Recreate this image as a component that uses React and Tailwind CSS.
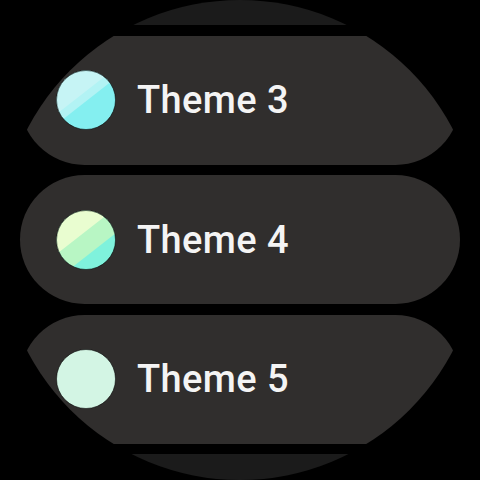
import React from "react";

function Swatch({ id, base, bands = [] }) {
  // bands: [color, endY] drawn over base, in a frame rotated so stripes rise to the right
  return (
    <svg width="60" height="60" viewBox="0 0 60 60" className="shrink-0">
      <defs>
        <clipPath id={"clip-" + id}>
          <circle cx="30" cy="30" r="29.5" />
        </clipPath>
      </defs>
      <g clipPath={"url(#clip-" + id + ")"}>
        <rect x="0" y="0" width="60" height="60" fill={base} />
        <g transform="rotate(-38 30 30)">
          {bands.map(([color, endY], i) => (
            <rect key={i} x="-30" y="-30" width="120" height={endY + 30} fill={color} />
          ))}
        </g>
      </g>
      <circle cx="30" cy="30" r="29.5" fill="none" stroke="rgba(0,0,0,0.55)" strokeWidth="1" />
    </svg>
  );
}

const items = [
  { id: "t2", dim: true },
  {
    id: "t3",
    label: "Theme 3",
    base: "#84eff0",
    bands: [
      ["#b2f3f4", 31],
      ["#c6f4f5", 23],
    ],
  },
  {
    id: "t4",
    label: "Theme 4",
    base: "#7ff2dc",
    bands: [
      ["#b8f6c4", 43],
      ["#e9fdd0", 23],
    ],
  },
  { id: "t5", label: "Theme 5", base: "#d3f5e4" },
  { id: "t6", dim: true },
];

function Card({ id, label, base, bands, dim }) {
  if (dim) {
    return <div className="h-[129px] shrink-0 rounded-full bg-[#1b1b1b]" />;
  }
  return (
    <div className="h-[129px] shrink-0 rounded-full flex items-center pl-[36px] gap-[21px] bg-[#302e2d]">
      <Swatch id={id} base={base} bands={bands} />
      <span className="text-[38px] tracking-[0.4px] font-medium text-[#f4f4f4] leading-none font-['Roboto',sans-serif]">
        {label}
      </span>
    </div>
  );
}

export default function App() {
  return (
    <div className="w-[480px] h-[480px] bg-black overflow-hidden">
      <div className="relative w-[480px] h-[480px] rounded-full overflow-hidden bg-black">
        <div className="flex flex-col gap-[10.5px] px-[20px] mt-[-104px]">
          {items.map((it) => (
            <Card key={it.id} {...it} />
          ))}
        </div>
        <div className="absolute inset-0 rounded-full bg-[radial-gradient(circle,rgba(0,0,0,0)_82%,rgba(0,0,0,0.55)_100%)] pointer-events-none" />
      </div>
    </div>
  );
}
